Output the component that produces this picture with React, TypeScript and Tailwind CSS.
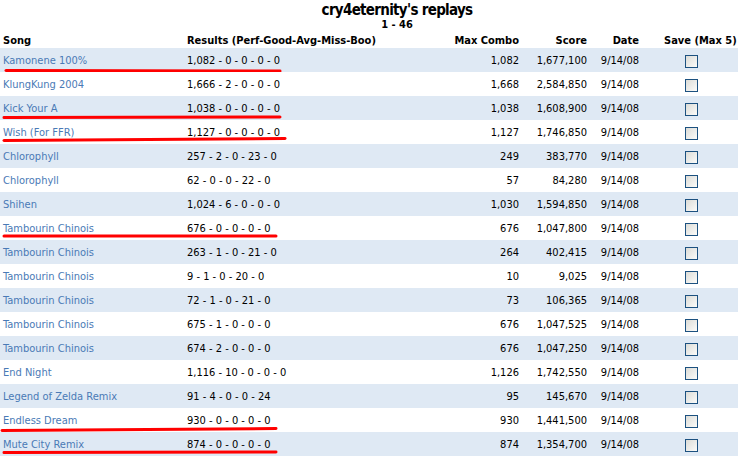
import React from 'react';

type Replay = {
  song: string;
  results: string;
  combo: string;
  score: string;
  date: string;
  // hand-drawn red mark: [x1, y1, x2, y2] inside the row
  mark?: [number, number, number, number];
};

const REPLAYS: Replay[] = [
  { song: 'Kamonene 100%', results: '1,082 - 0 - 0 - 0 - 0', combo: '1,082', score: '1,677,100', date: '9/14/08', mark: [6, 22.5, 280, 23] },
  { song: 'KlungKung 2004', results: '1,666 - 2 - 0 - 0 - 0', combo: '1,668', score: '2,584,850', date: '9/14/08' },
  { song: 'Kick Your A', results: '1,038 - 0 - 0 - 0 - 0', combo: '1,038', score: '1,608,900', date: '9/14/08', mark: [4, 21.5, 280, 21] },
  { song: 'Wish (For FFR)', results: '1,127 - 0 - 0 - 0 - 0', combo: '1,127', score: '1,746,850', date: '9/14/08', mark: [4, 20.5, 285, 18.5] },
  { song: 'Chlorophyll', results: '257 - 2 - 0 - 23 - 0', combo: '249', score: '383,770', date: '9/14/08' },
  { song: 'Chlorophyll', results: '62 - 0 - 0 - 22 - 0', combo: '57', score: '84,280', date: '9/14/08' },
  { song: 'Shihen', results: '1,024 - 6 - 0 - 0 - 0', combo: '1,030', score: '1,594,850', date: '9/14/08' },
  { song: 'Tambourin Chinois', results: '676 - 0 - 0 - 0 - 0', combo: '676', score: '1,047,800', date: '9/14/08', mark: [4, 20, 276, 20] },
  { song: 'Tambourin Chinois', results: '263 - 1 - 0 - 21 - 0', combo: '264', score: '402,415', date: '9/14/08' },
  { song: 'Tambourin Chinois', results: '9 - 1 - 0 - 20 - 0', combo: '10', score: '9,025', date: '9/14/08' },
  { song: 'Tambourin Chinois', results: '72 - 1 - 0 - 21 - 0', combo: '73', score: '106,365', date: '9/14/08' },
  { song: 'Tambourin Chinois', results: '675 - 1 - 0 - 0 - 0', combo: '676', score: '1,047,525', date: '9/14/08' },
  { song: 'Tambourin Chinois', results: '674 - 2 - 0 - 0 - 0', combo: '676', score: '1,047,250', date: '9/14/08' },
  { song: 'End Night', results: '1,116 - 10 - 0 - 0 - 0', combo: '1,126', score: '1,742,550', date: '9/14/08' },
  { song: 'Legend of Zelda Remix', results: '91 - 4 - 0 - 0 - 24', combo: '95', score: '145,670', date: '9/14/08' },
  { song: 'Endless Dream', results: '930 - 0 - 0 - 0 - 0', combo: '930', score: '1,441,500', date: '9/14/08', mark: [2, 22.5, 276, 20.5] },
  { song: 'Mute City Remix', results: '874 - 0 - 0 - 0 - 0', combo: '874', score: '1,354,700', date: '9/14/08', mark: [4, 20.5, 276, 20] },
];

const COLS = 'grid grid-cols-[184px_263px_69px_68px_52px_1fr] items-center';

function SaveBox() {
  return (
    <span className="block w-[13px] h-[13px] border border-[#1c5180] bg-[linear-gradient(135deg,#dcdcd7,#fbfbf9)]" />
  );
}

export default function App() {
  return (
    <div className="w-[738px] h-[456px] overflow-hidden bg-white text-black text-[11px] font-['DejaVu_Sans_Condensed','DejaVu_Sans',sans-serif]">
      <div className="pl-[56px] text-center">
        <h1 className="h-[18px] pt-[2px] text-[15px] leading-[16px] tracking-[-0.7px] font-bold whitespace-nowrap">cry4eternity's replays</h1>
        <div className="h-[13px] leading-[13px] font-bold">1 - 46</div>
      </div>

      <div className={`${COLS} h-[17px] pt-[3px] leading-[14px] pl-[3px] font-bold`}>
        <div>Song</div>
        <div>Results (Perf-Good-Avg-Miss-Boo)</div>
        <div className="text-right">Max Combo</div>
        <div className="text-right">Score</div>
        <div className="text-right">Date</div>
        <div className="pl-[25px] whitespace-nowrap">Save (Max 5)</div>
      </div>

      {REPLAYS.map((r, i) => (
        <div
          key={i}
          className={`${COLS} relative h-[24px] pt-[2px] pl-[3px] ${i % 2 === 0 ? 'bg-[#dfe9f4]' : 'bg-white'}`}
        >
          <a href="#" className="text-[#4a7ab6] whitespace-nowrap">{r.song}</a>
          <div>{r.results}</div>
          <div className="text-right">{r.combo}</div>
          <div className="text-right">{r.score}</div>
          <div className="text-right">{r.date}</div>
          <div className="pl-[46px]">
            <SaveBox />
          </div>
          {r.mark && (
            <svg className="absolute left-0 top-0 pointer-events-none" width="300" height="24">
              <line
                x1={r.mark[0]}
                y1={r.mark[1]}
                x2={r.mark[2]}
                y2={r.mark[3]}
                stroke="#ff0000"
                strokeWidth="3"
                strokeLinecap="round"
              />
            </svg>
          )}
        </div>
      ))}
    </div>
  );
}
